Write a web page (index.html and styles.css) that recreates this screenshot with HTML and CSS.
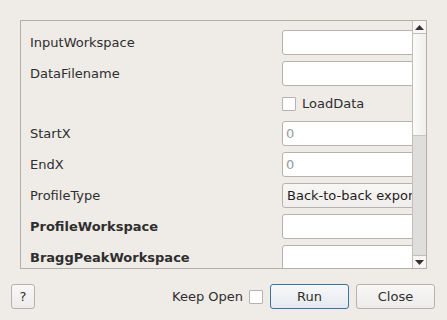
FILE: index.html
```html
<!DOCTYPE html>
<html>
  <head>
    <link rel="stylesheet" href="styles.css">
  </head>
  <body>
    <main class="dialog">
      <div class="scroll-frame">
        <div class="form">
          <div class="row">
            <label class="label">InputWorkspace</label>
            <div class="field"><input class="text-input" type="text"></div>
          </div>
          <div class="row">
            <label class="label">DataFilename</label>
            <div class="field"><input class="text-input" type="text"></div>
          </div>
          <div class="row row-check">
            <span class="label"></span>
            <div class="field check-field">
              <span class="checkbox"></span>
              <span class="check-text">LoadData</span>
            </div>
          </div>
          <div class="row">
            <label class="label">StartX</label>
            <div class="field"><input class="text-input" type="text" placeholder="0"></div>
          </div>
          <div class="row">
            <label class="label">EndX</label>
            <div class="field"><input class="text-input" type="text" placeholder="0"></div>
          </div>
          <div class="row">
            <label class="label">ProfileType</label>
            <div class="field"><div class="combo">Back-to-back exponential convoluted with pseudo-voigt</div></div>
          </div>
          <div class="row">
            <label class="label bold">ProfileWorkspace</label>
            <div class="field"><input class="text-input" type="text"></div>
          </div>
          <div class="row">
            <label class="label bold">BraggPeakWorkspace</label>
            <div class="field"><input class="text-input" type="text"></div>
          </div>
        </div>
        <div class="scrollbar">
          <div class="scroll-btn">
            <svg width="9" height="5" viewBox="0 0 9 5"><polygon points="0,5 9,5 4.5,0" fill="#333"/></svg>
          </div>
          <div class="scroll-slider"></div>
          <div class="scroll-groove"></div>
          <div class="scroll-btn scroll-btn-down">
            <svg width="9" height="5" viewBox="0 0 9 5"><polygon points="0,0 9,0 4.5,5" fill="#333"/></svg>
          </div>
        </div>
      </div>
      <div class="button-bar">
        <button class="btn btn-help">?</button>
        <div class="spacer"></div>
        <span class="keep-open">Keep Open</span>
        <span class="checkbox"></span>
        <button class="btn btn-run">Run</button>
        <button class="btn">Close</button>
      </div>
    </main>
  </body>
</html>
```

FILE: styles.css
```css
* {
  margin: 0;
  padding: 0;
  box-sizing: border-box;
}

body {
  background: #efebe7;
  font-family: "DejaVu Sans", sans-serif;
  font-size: 13px;
  color: #2e2e2e;
  width: 447px;
  height: 320px;
  overflow: hidden;
}

.dialog {
  padding: 20px 0 0 0;
}

.scroll-frame {
  margin-left: 20px;
  width: 407px;
  height: 249px;
  border: 1px solid #b3afa9;
  display: flex;
  overflow: hidden;
}

.form {
  width: 391px;
  padding-top: 9px;
  overflow: hidden;
  display: flex;
  flex-direction: column;
  gap: 6px;
}

.row {
  display: flex;
  align-items: center;
  height: 25px;
  flex-shrink: 0;
}

.row-check {
  height: 23px;
}

.label {
  width: 261px;
  padding-left: 9px;
  flex-shrink: 0;
}

.bold {
  font-weight: bold;
}

.field {
  width: 170px;
  flex-shrink: 0;
  height: 25px;
}

.text-input {
  width: 100%;
  height: 25px;
  border: 1px solid #b6b2ad;
  border-radius: 3px;
  background: #fff;
  font-family: "DejaVu Sans", sans-serif;
  font-size: 13px;
  padding-left: 3px;
  outline: none;
}

.text-input::placeholder {
  color: #9a9a9a;
}

.combo {
  height: 25px;
  border: 1px solid #b6b2ad;
  border-radius: 3px;
  background: linear-gradient(#f8f7f6, #efeeec);
  padding-left: 4px;
  line-height: 23px;
  white-space: nowrap;
  overflow: hidden;
  color: #1e1e1e;
}

.check-field {
  display: flex;
  align-items: center;
  gap: 6px;
  height: 23px;
}

.checkbox {
  display: inline-block;
  width: 14px;
  height: 14px;
  border: 1px solid #b6b2ad;
  border-radius: 1px;
  background: #fff;
  flex-shrink: 0;
}

.scrollbar {
  width: 14px;
  border-left: 1px solid #c2beb9;
  display: flex;
  flex-direction: column;
  background: #f4f3f1;
}

.scroll-btn {
  height: 13px;
  display: flex;
  align-items: center;
  justify-content: center;
  border-bottom: 1px solid #c2beb9;
  background: #f7f6f5;
}

.scroll-btn-down {
  border-bottom: none;
  border-top: 1px solid #c2beb9;
}

.scroll-slider {
  height: 102px;
  background: linear-gradient(90deg, #fbfbfa, #f0efed);
  border-bottom: 1px solid #c9c6c2;
}

.scroll-groove {
  flex: 1;
  background: #dfdedc;
}

.button-bar {
  display: flex;
  align-items: center;
  padding: 15px 12px 0 11px;
  gap: 7px;
}

.spacer {
  flex: 1;
}

.keep-open {
  margin-right: -1px;
}

.btn {
  height: 25px;
  width: 79px;
  border: 1px solid #b6b2ad;
  border-radius: 3px;
  background: linear-gradient(#f8f7f6, #edecea);
  font-family: "DejaVu Sans", sans-serif;
  font-size: 13px;
  color: #2e2e2e;
}

.btn-help {
  width: 24px;
}

.btn-run {
  border-color: #3a72a8;
  background: linear-gradient(#f7f8fa, #e5e9ee);
}
```
